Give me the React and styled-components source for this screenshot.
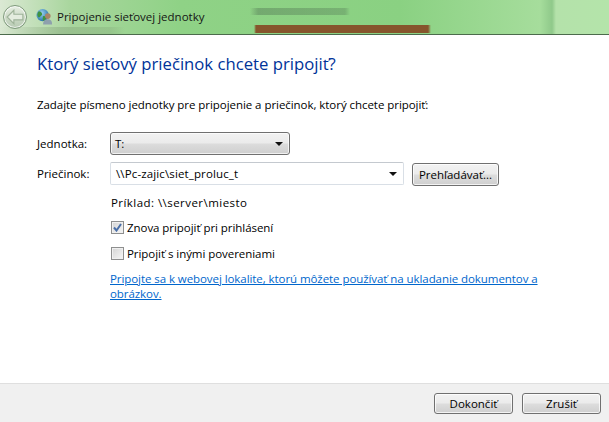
import React from "react";
import styled, { createGlobalStyle } from "styled-components";

const Global = createGlobalStyle`
  html, body { margin: 0; padding: 0; background: #fff; }
  body { width: 609px; height: 422px; overflow: hidden; font-family: "Open Sans", "Noto Sans", sans-serif; font-size: 11.5px; color: #000; }
  * { box-sizing: border-box; }
`;

const Win = styled.div`
  width: 609px; height: 422px; display: flex; flex-direction: column; background: #fff;
`;
const TitleBar = styled.header`
  height: 35px; flex: none; display: flex; align-items: center; gap: 4px; padding: 0 0 1px 3px;
  border-bottom: 1px solid #4c6b4c;
  background:
    linear-gradient(90deg, transparent 254px, #86552c 256px, #86552c 428px, transparent 431px) 0 25px / 100% 8px no-repeat,
    linear-gradient(90deg, transparent 250px, rgba(90,130,90,.5) 258px, rgba(90,130,90,.4) 345px, transparent 350px) 0 8px / 100% 7px no-repeat,
    linear-gradient(90deg, rgba(120,150,110,0) 0, rgba(120,150,110,.35) 60px, rgba(120,150,110,.25) 110px, rgba(120,150,110,0) 125px) 0 27px / 100% 7px no-repeat,
    linear-gradient(90deg, #dbe9d4 0, #a9d69e 70px, #8fd286 180px, #8ad182 400px, #a6dd9c 540px, #8fc98a 552px, #b4e2aa 556px, #b4e4aa 609px);
`;
const BackButton = styled.div`
  width: 24px; height: 24px; margin-right: 5px; border-radius: 50%; display: flex; align-items: center; justify-content: center;
  border: 1px solid #7f9a7c; background: linear-gradient(#e8efe4, #ccdac6 50%, #b8cbb4);
  box-shadow: inset 0 0 0 1px rgba(255,255,255,.7);
`;
const TitleText = styled.span`
  font-size: 11.5px; color: #151515;
`;
const Main = styled.main`
  flex: 1; padding: 17px 0 0 37px; display: flex; flex-direction: column;
`;
const Heading = styled.h1`
  margin: 0; font-size: 16.7px; line-height: 24px; font-weight: 400; color: #003399;
`;
const Intro = styled.p`
  margin: 20px 0 0; line-height: 17px; letter-spacing: -.05px;
`;
const FieldRow = styled.div`
  display: flex; align-items: center; height: 23px; margin-top: ${p => p.$top}px;
`;
const Label = styled.label`
  width: 73px; flex: none;
`;
const SelectBox = styled.div`
  width: 180px; height: 23px; display: flex; align-items: center; justify-content: space-between; padding: 0 5px 0 4px;
  border: 1px solid #707070; border-radius: 3px;
  background: linear-gradient(#f2f2f2 0, #ebebeb 48%, #dcdcdc 52%, #cfcfcf 100%);
  box-shadow: inset 0 0 0 1px rgba(255,255,255,.7);
`;
const ComboBox = styled.div`
  width: 294px; height: 23px; display: flex; align-items: center; justify-content: space-between; padding: 0 5px 0 5px;
  border: 1px solid #d9dfe6; border-top-color: #c4c9cf; border-radius: 2px; background: #fff; letter-spacing: .13px;
`;
const Arrow = styled.span`
  width: 0; height: 0; border-left: 4px solid transparent; border-right: 4px solid transparent; border-top: 4px solid #111;
  margin-right: 1px;
`;
const Button = styled.button`
  width: ${p => p.$w}px; height: ${p => p.$h}px; padding: 0; font: inherit; color: #000;
  border: 1px solid #707070; border-radius: 3px;
  background: linear-gradient(#f2f2f2 0, #ebebeb 48%, #dddddd 52%, #cfcfcf 100%);
  box-shadow: inset 0 0 0 1px rgba(255,255,255,.75);
`;
const BrowseButton = styled(Button)`
  margin-left: 8px; margin-top: 2px;
`;
const Options = styled.div`
  margin-left: 73px; display: flex; flex-direction: column; padding-left: 1px;
`;
const Example = styled.div`
  margin-top: 9px; line-height: 17px; letter-spacing: .45px;
`;
const CheckRow = styled.label`
  display: flex; align-items: center; gap: 3px; height: 17px; margin-top: ${p => p.$top}px; letter-spacing: -.05px;
`;
const CheckBox = styled.span`
  width: 13px; height: 13px; flex: none; border: 1px solid #8e8f8f; background: linear-gradient(135deg, #d4d4d4, #f6f6f6);
  box-shadow: inset 0 0 0 1px #f0f0f0; display: flex; align-items: center; justify-content: center;
`;
const HelpLink = styled.a`
  display: block; width: 440px; margin: 9px 0 0 -1px; line-height: 15px; color: #0066cc; text-decoration: underline; letter-spacing: -.07px;
`;
const Footer = styled.footer`
  height: 39px; flex: none; display: flex; align-items: flex-start; justify-content: flex-end; gap: 9px;
  padding: 9px 8px 0 0; background: #f0f0f0; border-top: 1px solid #dfdfdf;
`;

const NetIcon = () => (
  <svg width="17" height="18" viewBox="0 0 18 18">
    <defs>
      <radialGradient id="gl" cx=".4" cy=".35" r=".7">
        <stop offset="0" stopColor="#9fd4f2" />
        <stop offset="1" stopColor="#1e6ea8" />
      </radialGradient>
    </defs>
    <circle cx="7" cy="7" r="6.5" fill="url(#gl)" />
    <path d="M3 3c2 0 3 1 3.500 2.500S5 8 4 9 2 9 1.500 7.500 2 4 3 3zM8 8c2 0 3 1 2.500 2.500S9 13 8 13s-1-2-.8-3S7 8 8 8z" fill="#3f9440" />
    <circle cx="12.500" cy="8" r="3" fill="#a88468" />
    <path d="M7.500 17c0-4 2-5.500 5-5.500s4.500 1.500 4.500 5.500z" fill="#8ea0ad" />
  </svg>
);

export default function App() {
  return (
    <Win>
      <Global />
      <TitleBar>
        <BackButton>
          <svg width="18" height="16" viewBox="0 0 16 14" fill="#e4ecdf" stroke="#9fb39a" strokeWidth="1">
            <path d="M7 1 1 7l6 6V9.500h8v-5H7z" />
          </svg>
        </BackButton>
        <NetIcon />
        <TitleText>Pripojenie sieťovej jednotky</TitleText>
      </TitleBar>
      <Main>
        <Heading>Ktorý sieťový priečinok chcete pripojiť?</Heading>
        <Intro>Zadajte písmeno jednotky pre pripojenie a priečinok, ktorý chcete pripojiť:</Intro>
        <FieldRow $top={19}>
          <Label>Jednotka:</Label>
          <SelectBox>T:<Arrow /></SelectBox>
        </FieldRow>
        <FieldRow $top={7}>
          <Label>Priečinok:</Label>
          <ComboBox>\\Pc-zajic\siet_proluc_t<Arrow /></ComboBox>
          <BrowseButton $w={87} $h={23}>Prehľadávať...</BrowseButton>
        </FieldRow>
        <Options>
          <Example>Príklad: \\server\miesto</Example>
          <CheckRow $top={8}>
            <CheckBox>
              <svg width="9" height="9" viewBox="0 0 9 9" fill="none" stroke="#4a6fa8" strokeWidth="2">
                <path d="M1 4.500 3.500 7.500 8 1" />
              </svg>
            </CheckBox>
            Znova pripojiť pri prihlásení
          </CheckRow>
          <CheckRow $top={9}><CheckBox />Pripojiť s inými povereniami</CheckRow>
          <HelpLink>Pripojte sa k webovej lokalite, ktorú môžete používať na ukladanie dokumentov a obrázkov.</HelpLink>
        </Options>
      </Main>
      <Footer>
        <Button $w={79} $h={21}>Dokončiť</Button>
        <Button $w={79} $h={21}>Zrušiť</Button>
      </Footer>
    </Win>
  );
}
